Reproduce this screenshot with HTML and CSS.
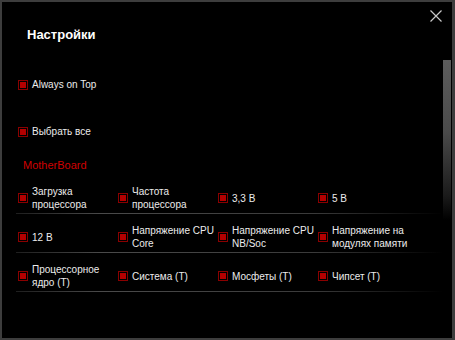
FILE: index.html
```html
<!DOCTYPE html>
<html lang="ru">
<head>
    <meta charset="UTF-8">
    <title>Настройки</title>
    <link rel="stylesheet" href="styles.css">
</head>
<body>
    <div class="window">
        <button class="close" type="button" aria-label="Закрыть">
            <svg width="12" height="12" viewBox="0 0 12 12">
                <path d="M0.5 0.5 L11.5 11.5 M11.5 0.5 L0.5 11.5" stroke="#c8c8c8" stroke-width="1.2" fill="none"/>
            </svg>
        </button>
        <div class="scrollbar"></div>

        <h2>Настройки</h2>

        <label class="option top-option"><span class="check"></span>Always on Top</label>
        <label class="option all-option"><span class="check"></span>Выбрать все</label>

        <div class="group-title">MotherBoard</div>

        <div class="rows">
            <div class="row">
                <label class="option"><span class="check"></span><span>Загрузка<br>процессора</span></label>
                <label class="option"><span class="check"></span><span>Частота<br>процессора</span></label>
                <label class="option"><span class="check"></span><span>3,3 В</span></label>
                <label class="option"><span class="check"></span><span>5 В</span></label>
            </div>
            <div class="row">
                <label class="option"><span class="check"></span><span>12 В</span></label>
                <label class="option"><span class="check"></span><span>Напряжение CPU<br>Core</span></label>
                <label class="option"><span class="check"></span><span>Напряжение CPU<br>NB/Soc</span></label>
                <label class="option"><span class="check"></span><span>Напряжение на<br>модулях памяти</span></label>
            </div>
            <div class="row">
                <label class="option"><span class="check"></span><span>Процессорное<br>ядро (Т)</span></label>
                <label class="option"><span class="check"></span><span>Система (Т)</span></label>
                <label class="option"><span class="check"></span><span>Мосфеты (Т)</span></label>
                <label class="option"><span class="check"></span><span>Чипсет (Т)</span></label>
            </div>
        </div>
    </div>
</body>
</html>
```

FILE: styles.css
```css
body {
    margin: 0;
    background: #000;
    font-family: "Liberation Sans", Arial, sans-serif;
    color: #ececec;
}
.window {
    position: relative;
    width: 455px;
    height: 340px;
    box-sizing: border-box;
    border: 2px solid #3d3d3d;
    border-right-width: 3px;
    background: #000;
    padding: 0 0 0 16px;
    overflow: hidden;
}
.close {
    position: absolute;
    top: 7px;
    right: 9px;
    width: 14px;
    height: 14px;
    padding: 1px;
    border: none;
    background: none;
    cursor: pointer;
}
.scrollbar {
    position: absolute;
    top: 58px;
    right: 1px;
    width: 8px;
    height: 160px;
    background: linear-gradient(to bottom, #5c5c5c 0%, #4a4a4a 45%, #1a1a1a 85%, rgba(0, 0, 0, 0) 100%);
}
h2 {
    margin: 24px 0 0 9px;
    font-size: 13px;
    font-weight: bold;
    line-height: 18px;
    color: #fff;
}
.option {
    display: flex;
    align-items: center;
    gap: 4px;
    font-size: 10px;
    line-height: 13px;
    cursor: pointer;
}
.check {
    flex: none;
    width: 8px;
    height: 8px;
    border: 1px solid #8a0000;
    background: #b40000;
    box-shadow: inset 0 0 0 1px #000;
}
.top-option {
    margin-top: 34px;
}
.all-option {
    margin-top: 34px;
}
.group-title {
    margin: 19px 0 0 5px;
    font-size: 11px;
    line-height: 16px;
    color: #d00000;
}
.rows {
    margin-top: 2px;
}
.row {
    display: grid;
    grid-template-columns: repeat(4, 100px);
    align-items: center;
    width: 424px;
    margin-left: -2px;
    padding: 10px 0 2px 2px;
    min-height: 26px;
    border-bottom: 1px solid transparent;
    border-image: linear-gradient(to right, #1e1e1e, #4a4a4a 20%, #3a3a3a 70%, rgba(0, 0, 0, 0)) 1;
}
```
